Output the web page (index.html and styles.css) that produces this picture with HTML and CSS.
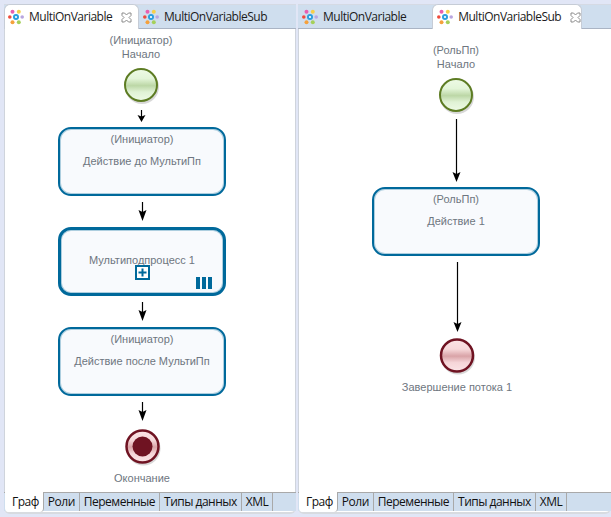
FILE: index.html
```html
<!DOCTYPE html>
<html lang="ru">
<head>
<meta charset="utf-8">
<title>MultiOnVariable</title>
<link rel="stylesheet" href="styles.css">
</head>
<body>
<svg class="defs" width="0" height="0" aria-hidden="true">
  <defs>
    <linearGradient id="gg" x1="0" y1="0" x2="0" y2="1">
      <stop offset="0" stop-color="#eefbe6"/><stop offset=".3" stop-color="#e3f5d8"/><stop offset=".52" stop-color="#bcd7a6"/><stop offset=".72" stop-color="#e0f2d5"/><stop offset="1" stop-color="#eefbe6"/>
    </linearGradient>
    <linearGradient id="rg" x1="0" y1="0" x2="0" y2="1">
      <stop offset="0" stop-color="#fbe4e6"/><stop offset=".3" stop-color="#f7d9db"/><stop offset=".52" stop-color="#d9a3a7"/><stop offset=".72" stop-color="#f5d5d8"/><stop offset="1" stop-color="#fbe4e6"/>
    </linearGradient>
    <symbol id="logo" viewBox="0 0 16 16">
      <circle cx="8" cy="8" r="3" fill="#2a9fe0"/><circle cx="8" cy="8" r="1.100" fill="#fff"/>
      <circle cx="4.500" cy="2.800" r="2" fill="#e85fb0"/><circle cx="10.800" cy="2.800" r="2" fill="#f5d04a"/>
      <circle cx="1.800" cy="8" r="1.800" fill="#ef4b3c"/><circle cx="14.200" cy="8" r="1.800" fill="#b9a6e0"/>
      <circle cx="4.500" cy="13.200" r="2" fill="#f5a13c"/><circle cx="10.800" cy="13.200" r="2" fill="#a5d05a"/>
    </symbol>
    <symbol id="close" viewBox="0 0 11 11">
      <path d="M1 1h2.500l2 2 2-2H10v2.500l-2 2 2 2V10H7.500l-2-2-2 2H1V7.500l2-2-2-2z" fill="#fff" stroke="#8a8a8a"/>
    </symbol>
  </defs>
</svg>
<main class="desk">
  <section class="panel panel-left">
    <div class="tabs">
      <div class="tab active"><svg class="logo"><use href="#logo"/></svg><span>MultiOnVariable</span><svg class="x"><use href="#close"/></svg></div>
      <div class="tab"><svg class="logo"><use href="#logo"/></svg><span>MultiOnVariableSub</span></div>
    </div>
    <div class="canvas">
      <svg class="wires" width="292" height="464">
        <g class="arrows">
          <path d="M136.500 81v8"/><path d="M137.500 173v10"/><path d="M137.500 273v10"/><path d="M137.500 373v10"/>
        </g>
        <g class="heads">
          <path d="M132.500 86l4 1.500 4-1.500-4 7z"/><path d="M133.500 181l4 2 4-2-4 11z"/><path d="M133.500 281l4 2 4-2-4 11z"/><path d="M133.500 381l4 2 4-2-4 11z"/>
        </g>
        <circle class="shadow" cx="137" cy="58" r="17"/>
        <circle class="start" cx="136" cy="56" r="16"/>
        <circle class="shadow" cx="138.500" cy="419.500" r="17"/>
        <circle class="end" cx="137.500" cy="417.500" r="16"/>
        <circle class="end-dot" cx="137.500" cy="417.500" r="10"/>
      </svg>
      <div class="label top-a"><span>(Инициатор)</span><span>Начало</span></div>
      <div class="task task-a"><span class="role">(Инициатор)</span><span class="name">Действие до МультиПп</span></div>
      <div class="task task-b thick">
        <span class="name multi">Мультиподпроцесс 1</span>
        <svg class="plus" width="15" height="15" viewBox="0 0 15 15"><path d="M1 1h13v13H1z" fill="#fff" stroke="#00699b" stroke-width="2"/><path d="M3.500 7.500h8M7.500 3.500v8" stroke="#00699b" stroke-width="2"/></svg>
        <svg class="bars" width="16" height="12" viewBox="0 0 16 12"><path d="M0 0h4v12H0zM6 0h4v12H6zM12 0h4v12h-4z" fill="#00699b"/></svg>
      </div>
      <div class="task task-c"><span class="role">(Инициатор)</span><span class="name">Действие после МультиПп</span></div>
      <div class="label end-a">Окончание</div>
    </div>
    <div class="bottom">
      <div class="btab on">Граф</div><div class="btab">Роли</div><div class="btab">Переменные</div><div class="btab">Типы данных</div><div class="btab">XML</div>
    </div>
  </section>
  <section class="panel panel-right">
    <div class="tabs">
      <div class="tab"><svg class="logo"><use href="#logo"/></svg><span>MultiOnVariable</span></div>
      <div class="tab active sub"><svg class="logo"><use href="#logo"/></svg><span>MultiOnVariableSub</span><svg class="x"><use href="#close"/></svg></div>
    </div>
    <div class="canvas">
      <svg class="wires" width="313" height="464">
        <g class="arrows"><path d="M157.500 90v56"/><path d="M158.500 233v62"/></g>
        <g class="heads"><path d="M153.500 143l4 2 4-2-4 10z"/><path d="M154.500 293l4 2 4-2-4 10z"/></g>
        <circle class="shadow" cx="158" cy="68" r="17"/>
        <circle class="start" cx="157" cy="66" r="16"/>
        <circle class="shadow" cx="159" cy="328.500" r="17"/>
        <circle class="end" cx="158" cy="326.500" r="16"/>
      </svg>
      <div class="label top-b"><span>(РольПп)</span><span>Начало</span></div>
      <div class="task task-d"><span class="role">(РольПп)</span><span class="name">Действие 1</span></div>
      <div class="label end-b">Завершение потока 1</div>
    </div>
    <div class="bottom">
      <div class="btab on">Граф</div><div class="btab">Роли</div><div class="btab">Переменные</div><div class="btab">Типы данных</div><div class="btab">XML</div>
    </div>
  </section>
</main>
</body>
</html>
```

FILE: styles.css
```css
* { box-sizing: border-box; }
html, body { margin: 0; height: 100%; }
body { background: #e1e6f6; overflow: hidden; font-family: "Liberation Sans", Arial, sans-serif; }
.defs { position: absolute; }
.desk { display: flex; gap: 2px; height: 517px; padding: 4px 0 4px 4px; }
.panel { display: flex; flex-direction: column; background: #fff; height: 510px; padding-bottom: 1px; border-bottom: 2px solid #d8dbe0; border-radius: 0 0 6px 6px; }
.panel-left { width: 292px; }
.panel-right { width: 313px; flex: none; }
.tabs { display: flex; height: 25px; flex: none; background: #cfdeee; border-bottom: 1px solid #aab4c4; border-top: 1px solid #d5dae4; }
.tab { display: flex; align-items: center; height: 24px; padding: 0 0 0 4px; font: 12px/16px "Open Sans", sans-serif; letter-spacing: -.5px; color: #1b1b1b; white-space: nowrap; }
.tab.active { background: #fff; border: 1px solid #c6ccd6; border-bottom: 0; border-radius: 6px 6px 0 0; height: 25px; margin-top: -1px; width: 135px; padding-left: 3px; position: relative; }
.tab.active.sub { width: 150px; margin-left: 26px; padding-left: 4px; }
.logo { width: 16px; height: 16px; margin-right: 5px; flex: none; }
.x { width: 11px; height: 11px; margin-left: 9px; flex: none; }
.canvas { position: relative; flex: 1; background: #fff; border-left: 1px solid #cfd4dc; }
.panel-left .canvas { border-right: 1px solid #cfd4dc; }
.wires { position: absolute; left: 0; top: 0; }
.arrows path { stroke: #000; stroke-width: 1.200; fill: none; }
.heads path { fill: #000; }
.shadow { fill: #b8b8b8; opacity: .55; }
.start { fill: url(#gg); stroke: #5d7c23; stroke-width: 2; }
.end { fill: url(#rg); stroke: #6f1322; stroke-width: 2.500; }
.end-dot { fill: #6f1322; }
.label { position: absolute; display: flex; flex-direction: column; align-items: center; gap: 1px; width: 160px; font-size: 11px; line-height: 13px; color: #6e7680; text-align: center; }
.top-a { left: 56px; top: 5px; }
.top-b { left: 77px; top: 15px; }
.end-a { left: 57px; top: 443px; }
.end-b { left: 78px; top: 352px; }
.task { position: absolute; width: 168px; height: 69px; display: flex; flex-direction: column; align-items: center; background: #f8fafd; border: 2px solid #00699b; border-radius: 13px; box-shadow: inset 0 0 0 1px rgba(0, 105, 155, .3); font-size: 11px; line-height: 13px; color: #6e7680; text-align: center; }
.task-a { left: 53px; top: 98px; }
.task-b { left: 53px; top: 198px; }
.task-c { left: 53px; top: 298px; }
.task-d { left: 73px; top: 158px; }
.thick { border-width: 3px; }
.role { margin-top: 4px; }
.name { margin-top: 9px; }
.multi { margin-top: 24px; }
.plus { position: absolute; left: 74px; top: 35px; }
.bars { position: absolute; right: 11px; bottom: 4px; }
.bottom { display: flex; height: 19px; flex: none; background: #cfdeee; border-top: 1px solid #a9a9a9; font: 12px/18px "Open Sans", sans-serif; letter-spacing: -.5px; color: #111; }
.btab { padding: 0 4px; border-right: 1px solid #a9a9a9; white-space: nowrap; }
.btab.on { background: #fff; margin-top: -1px; height: 20px; border-right: 1px solid #a9a9a9; border-radius: 0 0 4px 4px; margin-left: 1px; padding-left: 7px; line-height: 20px; }
```
